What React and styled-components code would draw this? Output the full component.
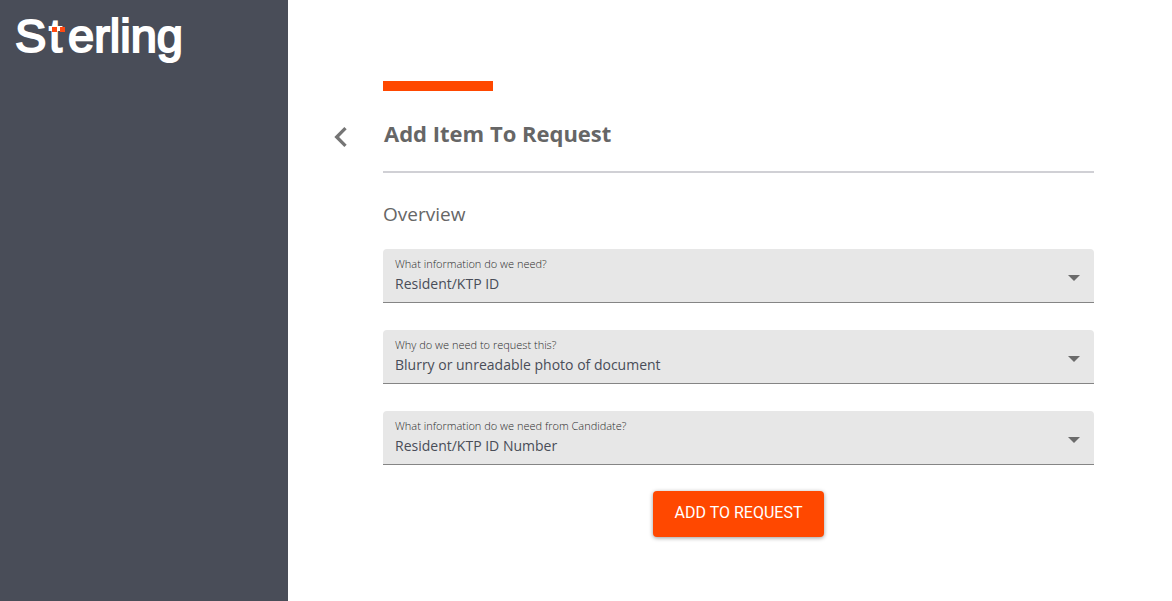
import React from "react";
import styled, { createGlobalStyle } from "styled-components";

const GlobalStyle = createGlobalStyle`
  *, *::before, *::after { box-sizing: border-box; }
  body {
    margin: 0;
    background: #fff;
    color: #666;
    font-family: "Open Sans", "Noto Sans", sans-serif;
  }
`;

const Page = styled.div`
  display: flex;
  min-height: 100vh;
`;

const Sidebar = styled.aside`
  flex: 0 0 288px;
  padding: 12px 16px;
  background: #494d58;
`;

const Logo = styled.svg`
  display: block;
  width: 168px;
  height: 52px;
  overflow: visible;
`;

const Main = styled.main`
  flex: 1;
  min-width: 0;
  display: grid;
  grid-template-columns: 62px minmax(0, 1fr);
  align-content: start;
  padding: 81px 78px 64px 33px;
`;

const Accent = styled.div`
  grid-column: 2;
  width: 110px;
  height: 10px;
  background: #ff4800;
`;

const BackButton = styled.button`
  grid-column: 1;
  width: 40px;
  height: 40px;
  margin-top: 26px;
  padding: 0;
  border: 0;
  background: none;
  color: #757575;
  cursor: pointer;

  svg {
    display: block;
    width: 40px;
    height: 40px;
    fill: currentColor;
  }
`;

const Header = styled.header`
  grid-column: 2;
  height: 82px;
  padding: 26px 1px 0;
  border-bottom: 2px solid #d0d0d5;
`;

const Title = styled.h1`
  margin: 0;
  font-size: 22px;
  line-height: 32px;
  font-weight: 700;
`;

const Form = styled.form`
  grid-column: 2;
  display: flex;
  flex-direction: column;
  padding-top: 27px;
`;

const SectionTitle = styled.h2`
  margin: 0 0 21px;
  font-size: 19px;
  line-height: 28px;
  font-weight: 400;
`;

const FieldList = styled.div`
  display: flex;
  flex-direction: column;
  gap: 27px;
`;

const Field = styled.div`
  position: relative;
  height: 54px;
`;

const FieldLabel = styled.label`
  position: absolute;
  top: 7px;
  left: 12px;
  font-size: 11px;
  line-height: 16px;
  font-weight: 300;
  color: #2c2c2c;
  pointer-events: none;
`;

const Select = styled.select`
  display: block;
  width: 100%;
  height: 100%;
  padding: 20px 40px 4px 12px;
  border: 0;
  border-bottom: 1px solid #858585;
  border-radius: 4px 4px 0 0;
  appearance: none;
  background: #e7e7e7;
  color: #494d58;
  font-family: inherit;
  font-size: 14px;
  line-height: 20px;
`;

const Arrow = styled.svg`
  position: absolute;
  top: 26px;
  right: 14px;
  width: 12px;
  height: 6px;
  fill: #6b6b6b;
  pointer-events: none;
`;

const SubmitButton = styled.button`
  align-self: center;
  height: 46px;
  margin-top: 26px;
  padding: 0 22px 2px;
  border: 0;
  border-radius: 4px;
  background: #ff4800;
  box-shadow: 0 1px 4px rgba(0, 0, 0, 0.4);
  color: #fff;
  font-family: Roboto, sans-serif;
  font-size: 16px;
  font-weight: 400;
  line-height: 24px;
  cursor: pointer;
`;

const fields = [
  { id: "item", label: "What information do we need?", value: "Resident/KTP ID" },
  { id: "reason", label: "Why do we need to request this?", value: "Blurry or unreadable photo of document" },
  { id: "detail", label: "What information do we need from Candidate?", value: "Resident/KTP ID Number" },
];

function SterlingLogo() {
  return (
    <Logo viewBox="0 0 168 52" role="img" aria-label="Sterling">
      <text
        y="40"
        fill="#fff"
        stroke="#fff"
        strokeWidth="2"
        fontFamily="'Liberation Sans', Arial, sans-serif"
        fontSize="47"
      >
        <tspan x="-1">S</tspan>
        <tspan x="33">t</tspan>
        <tspan x="52">erling</tspan>
      </text>
      {/* two orange squares on the bar of the t */}
      <path d="M36 15h5v5h-5zM44 15h5v5h-5z" fill="#ff4a12" />
    </Logo>
  );
}

export default function App() {
  return (
    <>
      <GlobalStyle />
      <Page>
        <Sidebar>
          <SterlingLogo />
        </Sidebar>
        <Main>
          <Accent />
          <BackButton type="button" aria-label="Back">
            <svg viewBox="0 0 24 24" aria-hidden="true">
              <path d="M15.41 7.41 14 6l-6 6 6 6 1.41-1.41L10.83 12z" />
            </svg>
          </BackButton>
          <Header>
            <Title>Add Item To Request</Title>
          </Header>
          <Form onSubmit={(event) => event.preventDefault()}>
            <SectionTitle>Overview</SectionTitle>
            <FieldList>
              {fields.map(({ id, label, value }) => (
                <Field key={id}>
                  <Select id={id} defaultValue={value}>
                    <option>{value}</option>
                  </Select>
                  <FieldLabel htmlFor={id}>{label}</FieldLabel>
                  <Arrow viewBox="0 0 12 6" aria-hidden="true">
                    <path d="M0 0h12L6 6z" />
                  </Arrow>
                </Field>
              ))}
            </FieldList>
            <SubmitButton type="submit">ADD TO REQUEST</SubmitButton>
          </Form>
        </Main>
      </Page>
    </>
  );
}
